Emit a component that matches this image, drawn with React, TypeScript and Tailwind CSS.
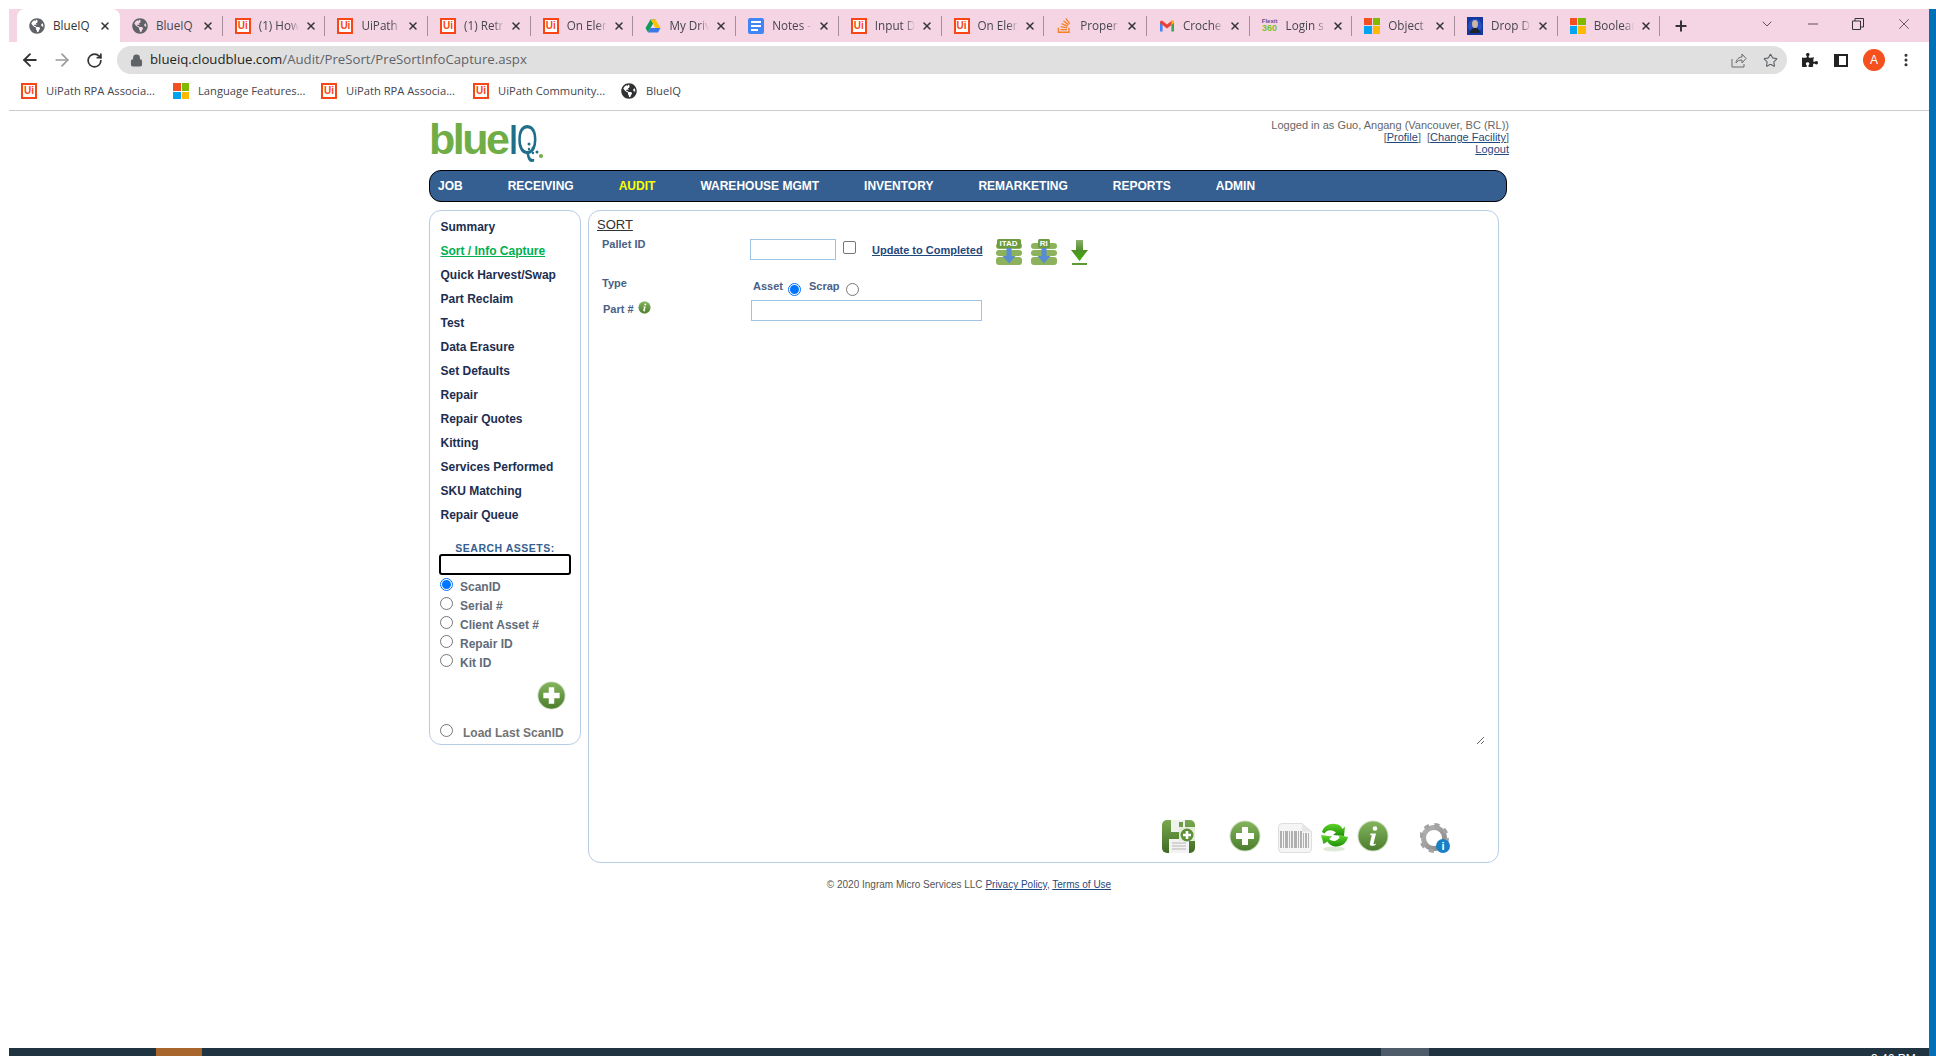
import { ArrowLeft, ArrowRight, RotateCw, Lock, Star, X, Plus, ChevronDown, Minus, MoreVertical } from "lucide-react";
import { FaGlobeAmericas, FaPuzzlePiece, FaStackOverflow } from "react-icons/fa";

const Globe = ({ size = 16 }: { size?: number }) => (
  <FaGlobeAmericas size={size} className="text-[#5f6368]" />
);

const UiLogo = () => (
  <div className="flex h-4 w-4 shrink-0 items-center justify-center border-2 border-[#fa4616] bg-white text-[10px] leading-none font-bold text-[#fa4616] font-['Liberation_Sans',sans-serif]">
    Ui
  </div>
);

const MsLogo = () => (
  <div className="grid h-4 w-4 shrink-0 grid-cols-2 gap-px">
    <div className="bg-[#f25022]" />
    <div className="bg-[#7fba00]" />
    <div className="bg-[#00a4ef]" />
    <div className="bg-[#ffb900]" />
  </div>
);

const DriveLogo = () => (
  <svg width="16" height="16" viewBox="0 0 16 16">
    <path d="M5.5 1.5h5L5.5 10 3 14.5 0.5 10z" fill="#0f9d58" />
    <path d="M5.5 1.5h5l5 8.5h-5z" fill="#ffc107" />
    <path d="M3 14.5 5.5 10h10l-2.5 4.5z" fill="#3b78e7" />
  </svg>
);

const DocsLogo = () => (
  <div className="flex h-4 w-4 shrink-0 flex-col justify-center gap-[2px] rounded-[2px] bg-[#4285f4] px-[3px]">
    <div className="h-[2px] bg-white" />
    <div className="h-[2px] bg-white" />
    <div className="h-[2px] w-[7px] bg-white" />
  </div>
);

const GmailLogo = () => (
  <svg width="16" height="16" viewBox="0 0 16 16">
    <path d="M1 3.5v10h2.6V7z" fill="#4285f4" />
    <path d="M15 3.5v10h-2.6V7z" fill="#34a853" />
    <path d="M1 3.5 3 2.5 8 6.6 13 2.5l2 1V5L8 10.4 1 5z" fill="#ea4335" />
    <path d="M13 2.5l2 1V5l-2.6 2V3z" fill="#fbbc04" />
  </svg>
);

const FlexitLogo = () => (
  <div className="flex w-4 shrink-0 flex-col items-center font-['Liberation_Sans',sans-serif] leading-none font-bold">
    <span className="text-[6px] text-[#6b4a8e]">Flexit</span>
    <span className="text-[9px] text-[#7cc02a]">360</span>
  </div>
);

const AvatarLogo = () => (
  <svg width="16" height="18" viewBox="0 0 16 18" className="shrink-0">
    <rect width="16" height="18" fill="#1437a0" />
    <circle cx="8" cy="9" r="7" fill="#2a4fc0" />
    <ellipse cx="8" cy="7" rx="3" ry="4" fill="#c9b8a5" />
    <path d="M2.5 16c1-4 3.500-5 5.500-5s4.500 1 5.500 5z" fill="#1c2430" />
  </svg>
);

const SoLogo = () => <FaStackOverflow size={17} className="text-[#f48024]" />;

const tabs = [
  { title: "BlueIQ", icon: <Globe />, fade: false },
  { title: "(1) How", icon: <UiLogo />, fade: true },
  { title: "UiPath I", icon: <UiLogo />, fade: true },
  { title: "(1) Retri", icon: <UiLogo />, fade: true },
  { title: "On Elem", icon: <UiLogo />, fade: true },
  { title: "My Driv", icon: <DriveLogo />, fade: true },
  { title: "Notes -", icon: <DocsLogo />, fade: true },
  { title: "Input D", icon: <UiLogo />, fade: true },
  { title: "On Elem", icon: <UiLogo />, fade: true },
  { title: "Proper", icon: <SoLogo />, fade: true },
  { title: "Croche", icon: <GmailLogo />, fade: true },
  { title: "Login s", icon: <FlexitLogo />, fade: true },
  { title: "Object", icon: <MsLogo />, fade: true },
  { title: "Drop D", icon: <AvatarLogo />, fade: true },
  { title: "Boolear", icon: <MsLogo />, fade: true },
];

const bookmarks = [
  { title: "UiPath RPA Associa...", icon: <UiLogo />, width: "w-[152px]" },
  { title: "Language Features...", icon: <MsLogo />, width: "w-[148px]" },
  { title: "UiPath RPA Associa...", icon: <UiLogo />, width: "w-[152px]" },
  { title: "UiPath Community...", icon: <UiLogo />, width: "w-[148px]" },
  { title: "BlueIQ", icon: <FaGlobeAmericas size={16} className="text-[#2f3133]" />, width: "w-[80px]" },
];

const navItems = ["JOB", "RECEIVING", "AUDIT", "WAREHOUSE MGMT", "INVENTORY", "REMARKETING", "REPORTS", "ADMIN"];

const sideItems = [
  "Summary",
  "Sort / Info Capture",
  "Quick Harvest/Swap",
  "Part Reclaim",
  "Test",
  "Data Erasure",
  "Set Defaults",
  "Repair",
  "Repair Quotes",
  "Kitting",
  "Services Performed",
  "SKU Matching",
  "Repair Queue",
];

const searchTypes = ["ScanID", "Serial #", "Client Asset #", "Repair ID", "Kit ID"];

const Radio = ({ checked = false }: { checked?: boolean }) => (
  <div className={`flex h-[13px] w-[13px] shrink-0 items-center justify-center rounded-full border bg-white ${checked ? "border-[#0075ff]" : "border-[#767676]"}`}>
    {checked ? <div className="h-[9px] w-[9px] rounded-full bg-[#0075ff]" /> : null}
  </div>
);

const PlusCircle = ({ size }: { size: number }) => (
  <svg width={size} height={size} viewBox="0 0 32 32" className="shrink-0">
    <defs>
      <linearGradient id="pc" x1="0" y1="0" x2="0" y2="1">
        <stop offset="0" stopColor="#84b55c" />
        <stop offset="1" stopColor="#4b7d2d" />
      </linearGradient>
    </defs>
    <circle cx="16" cy="16" r="15.500" fill="#cfdcc4" />
    <circle cx="16" cy="16" r="14.500" fill="url(#pc)" />
    <path d="M13 7h6v6h6v6h-6v6h-6v-6H7v-6h6z" fill="#fff" />
  </svg>
);

const InfoCircle = ({ size }: { size: number }) => (
  <svg width={size} height={size} viewBox="0 0 32 32" className="shrink-0">
    <defs>
      <linearGradient id="ic" x1="0" y1="0" x2="0" y2="1">
        <stop offset="0" stopColor="#84b55c" />
        <stop offset="1" stopColor="#4b7d2d" />
      </linearGradient>
    </defs>
    <circle cx="16" cy="16" r="15.500" fill="#cfdcc4" />
    <circle cx="16" cy="16" r="14.500" fill="url(#ic)" />
    <circle cx="18" cy="8.500" r="2.300" fill="#fff" />
    <path d="M13.500 13.500h5.500l-2.500 10c-.2.900.6 1 2.300.1l-.3 1.300c-2.500 1.400-6.300 1.500-5.700-1.300l2-8.400h-1.700z" fill="#fff" />
  </svg>
);

// green stack with a blue down arrow, label on a cap at the top
const StackIcon = ({ label, capX, capW }: { label: string; capX: number; capW: number }) => (
  <div className="relative h-[26px] w-[26px] shrink-0">
    <svg width="26" height="26" viewBox="0 0 26 26" className="absolute top-0 left-0">
      <rect x="0" y="4" width="26" height="6" rx="3" fill="#8cb35c" />
      <rect x="0" y="11" width="26" height="6" rx="3" fill="#8cb35c" />
      <rect x="0" y="18" width="26" height="8" rx="3" fill="#8cb35c" />
      <rect x={capX} y="0" width={capW} height="9" rx="1.500" fill="#6f9a40" />
      <path d="M10.500 9h5v8h4l-6.500 7.500L6.500 17h4z" fill="#5b8bd0" />
    </svg>
    <span className="absolute top-0 left-0 w-full text-center text-[8px] leading-[9px] font-bold text-white">{label}</span>
  </div>
);

const DownloadIcon = () => (
  <svg width="17" height="25" viewBox="0 0 17 25" className="shrink-0">
    <defs>
      <linearGradient id="dl" x1="0" y1="0" x2="0" y2="1">
        <stop offset="0" stopColor="#8fae6e" />
        <stop offset="0.500" stopColor="#4f8f2a" />
        <stop offset="1" stopColor="#3fb000" />
      </linearGradient>
    </defs>
    <path d="M5 0h7v10h5l-8.500 11L0 10h5z" fill="url(#dl)" />
    <rect x="1" y="23" width="15" height="2" fill="#5c9a33" />
  </svg>
);

const SaveIcon = () => (
  <div className="relative h-[33px] w-[33px] shrink-0">
    <svg width="33" height="33" viewBox="0 0 33 33">
      <defs>
        <linearGradient id="sv" x1="0" y1="0" x2="0" y2="1">
          <stop offset="0" stopColor="#78a94f" />
          <stop offset="1" stopColor="#3f6b22" />
        </linearGradient>
      </defs>
      <rect width="33" height="33" rx="5" fill="url(#sv)" />
      <rect x="9" y="0" width="14" height="12" fill="#eef2ea" />
      <rect x="17" y="2" width="4" height="8" fill="#6f9a4b" />
      <rect x="7" y="19" width="20" height="14" fill="#f3f3f3" />
      <path d="M10 23h14M10 26h14M10 29h14" stroke="#b5b5b5" strokeWidth="1" />
      <rect x="17" y="7" width="16" height="14" fill="#e5ecdc" />
      <circle cx="25" cy="15" r="6.500" fill="#5d9037" />
      <path d="M23.700 11h2.600v2.700H29v2.600h-2.700V19h-2.600v-2.700H21v-2.600h2.700z" fill="#fff" />
    </svg>
  </div>
);

const BarcodeIcon = () => (
  <svg width="34" height="30" viewBox="0 0 34 30" className="shrink-0">
    <path d="M4 .5h20l9.500 8V26a3.500 3.500 0 0 1-3.500 3.500H4A3.500 3.500 0 0 1 .5 26V4A3.500 3.500 0 0 1 4 .5z" fill="#f5f5f5" stroke="#dedede" />
    <path d="M24 .5V8.500h9.500z" fill="#e6e6e6" />
    <g fill="#b0b0b0">
      <rect x="2" y="8" width="2" height="17" />
      <rect x="5" y="8" width="1" height="17" />
      <rect x="7" y="8" width="3" height="17" />
      <rect x="11" y="8" width="1" height="17" />
      <rect x="13" y="8" width="2" height="17" />
      <rect x="16" y="8" width="3" height="17" />
      <rect x="20" y="8" width="1" height="17" />
      <rect x="22" y="8" width="2" height="17" />
      <rect x="25" y="10" width="1" height="15" />
      <rect x="27" y="10" width="2" height="15" />
      <rect x="30" y="10" width="1" height="15" />
    </g>
  </svg>
);

const RefreshIcon = () => (
  <svg width="28" height="31" viewBox="0 0 28 31" className="shrink-0">
    <defs>
      <linearGradient id="rf" x1="0" y1="0" x2="0" y2="1">
        <stop offset="0" stopColor="#5fd42a" />
        <stop offset="1" stopColor="#1f8f06" />
      </linearGradient>
    </defs>
    <ellipse cx="14" cy="28" rx="11" ry="2.500" fill="#dfe9d8" />
    <path d="M2 11C4 4 11 1 18 3.500c2 .8 3.500 2.500 4.500 4.500L25 5.500l-1 9.500-11-1 3-2.500C11 8 7 9 4.500 12.500z" fill="url(#rf)" />
    <path d="M1 14l11 1.500-3 2.500c4 3 8 2.500 10.500-1.500l-1-2.500L28 16c-1.500 7-8.500 11-15 9-2.500-.8-4.500-2.500-5.500-4.500L3.500 23z" fill="url(#rf)" />
  </svg>
);

const GearIcon = () => (
  <div className="relative h-[30px] w-[30px] shrink-0">
    <svg width="30" height="30" viewBox="0 0 30 30">
      <defs>
        <linearGradient id="gr" x1="0" y1="0" x2="1" y2="1">
          <stop offset="0" stopColor="#b5b5b5" />
          <stop offset="1" stopColor="#858585" />
        </linearGradient>
      </defs>
      <circle cx="14" cy="15" r="10.500" fill="none" stroke="url(#gr)" strokeWidth="5" />
      <circle cx="14" cy="15" r="13" fill="none" stroke="#a3a3a3" strokeWidth="4" strokeDasharray="5 5.200" />
    </svg>
    <div className="absolute right-0 bottom-0 flex h-[14px] w-[14px] items-center justify-center rounded-full bg-[#1a7fc4] text-[11px] leading-none font-bold text-white">
      i
    </div>
  </div>
);

export default function App() {
  return (
    <div className="flex h-[1056px] w-[1936px] overflow-hidden bg-white font-['Liberation_Sans',Arial,sans-serif]">
      <div className="w-[9px] shrink-0" />
      <div className="flex w-[1920px] shrink-0 flex-col">
        {/* browser chrome */}
        <div className="mt-[9px] flex h-[33px] shrink-0 items-center bg-[#f5d5e4] pl-2 font-['Open_Sans',sans-serif] text-[11.7px] text-[#45454d]">
          <div className="flex h-full w-[103px] shrink-0 items-center rounded-t-lg bg-white pl-3 text-[#333]">
            <Globe />
            <span className="ml-2 w-[40px] overflow-hidden whitespace-nowrap">BlueIQ</span>
            <X size={12} strokeWidth={3} className="ml-[6px] text-[#333]" />
          </div>
          {tabs.map((tab, i) => (
            <div key={i} className="flex h-[20px] w-[102.7px] shrink-0 items-center border-r border-[#a58e9a] pl-3">
              <div className="flex w-4 shrink-0 justify-center">{tab.icon}</div>
              <span className={`ml-2 w-[40px] overflow-hidden whitespace-nowrap ${tab.fade ? "[mask-image:linear-gradient(to_right,black_75%,transparent)]" : ""}`}>
                {tab.title}
              </span>
              <X size={12} strokeWidth={3} className="ml-[6px] text-[#333]" />
            </div>
          ))}
          <Plus size={16} strokeWidth={3} className="ml-[13px] text-[#333]" />
          <ChevronDown size={16} strokeWidth={1.2} className="mb-1 ml-[70px] text-[#333]" />
          <Minus size={16} strokeWidth={1.2} className="mb-1 ml-[30px] text-[#333]" />
          <svg width="12" height="12" viewBox="0 0 12 12" className="mb-1 ml-[31px]">
            <path d="M.5 3h8v8.500h-8zM3 3V.5h8.500V9H8.500" fill="none" stroke="#333" />
          </svg>
          <X size={18} strokeWidth={1} className="mb-1 ml-[31px] text-[#333]" />
        </div>
        <div className="flex h-9 shrink-0 items-center pl-[11px] text-[#333]">
          <ArrowLeft size={20} strokeWidth={2.2} />
          <ArrowRight size={20} strokeWidth={2} className="ml-[12px] text-[#9a9a9a]" />
          <RotateCw size={17} strokeWidth={2.4} className="ml-[14px]" />
          <div className="ml-[14px] flex h-7 w-[1670px] shrink-0 items-center rounded-full bg-[#e0e0e0] pl-[13px] pr-[9px]">
            <Lock size={13} strokeWidth={2.5} className="text-[#5f6368]" fill="#5f6368" />
            <span className="ml-[7px] flex-1 font-['Open_Sans',sans-serif] text-[13.2px] text-[#5f6368]">
              <span className="text-[#222]">blueiq.cloudblue.com</span>/Audit/PreSort/PreSortInfoCapture.aspx
            </span>
            <svg width="16" height="16" viewBox="0 0 16 16" className="mr-[16px]">
              <path d="M1 7v8h12v-3M5 11c.5-4 3-6 6-6V2l4 4.500-4 4.500V8c-3 0-5 1-6 3z" fill="none" stroke="#6a6a6a" />
            </svg>
            <Star size={15} strokeWidth={1.8} className="text-[#5f6368]" />
          </div>
          <FaPuzzlePiece size={16} className="ml-[15px] shrink-0 text-[#222]" />
          <div className="ml-[16px] flex h-[13px] w-[14px] shrink-0 justify-end border-2 border-[#222] bg-[#222]">
            <div className="h-full w-[7px] bg-white" />
          </div>
          <div className="ml-[15px] flex h-[22px] w-[22px] shrink-0 items-center justify-center rounded-full bg-[#f4511e] text-[12px] text-white">A</div>
          <MoreVertical size={16} strokeWidth={2.6} className="ml-[13px] shrink-0 text-[#333]" />
        </div>
        <div className="flex h-[33px] shrink-0 items-center border-b border-[#cccccc] pl-[12px] pb-[5px] font-['Open_Sans',sans-serif] text-[11.2px] text-[#45454d]">
          {bookmarks.map((b, i) => (
            <div key={i} className={`flex items-center gap-[9px] whitespace-nowrap ${b.width}`}>
              {b.icon}
              <span>{b.title}</span>
            </div>
          ))}
        </div>

        {/* page */}
        <div className="ml-[420px] w-[1080px] text-[12px]">
          <div className="flex h-[59px] justify-between">
            <div className="relative mt-[6px] flex h-[44px] items-start text-[43px] leading-[44px]">
              <span className="font-bold tracking-[-2.5px] text-[#70ad47]">blue</span>
              <span className="text-[#1f6f8b]">I</span>
              <span className="ml-[-2px] inline-block origin-left scale-x-[0.62] text-[#1f6f8b]">Q</span>
              <svg width="24" height="20" viewBox="0 0 24 20" className="absolute top-[24px] left-[92px]">
                <circle cx="8" cy="3" r="1.500" fill="#1f6f8b" />
                <circle cx="12" cy="7" r="1.500" fill="#1f6f8b" />
                <circle cx="8" cy="8" r="1.200" fill="#1f6f8b" />
                <circle cx="16" cy="11" r="1.500" fill="#1f6f8b" />
                <circle cx="12" cy="12" r="1.200" fill="#1f6f8b" />
                <circle cx="20" cy="15" r="2" fill="#70ad47" />
              </svg>
            </div>
            <div className="mt-2 text-right text-[11px] leading-[12px] text-[#666666]">
              <div>Logged in as Guo, Angang (Vancouver, BC (RL))</div>
              <div>
                [<a className="text-[#1f497d] underline">Profile</a>]&nbsp; [<a className="text-[#1f497d] underline">Change Facility</a>]
              </div>
              <div>
                <a className="text-[#1f497d] underline">Logout</a>
              </div>
            </div>
          </div>

          <div className="flex h-8 w-[1078px] items-center gap-[45px] rounded-xl border border-black bg-[#365f91] pl-2 text-[12px] font-bold text-white">
            {navItems.map((item) => (
              <span key={item} className={item === "AUDIT" ? "text-[#ffff00]" : ""}>
                {item}
              </span>
            ))}
          </div>

          <div className="mt-2 flex items-start gap-[7px]">
            <div className="h-[535px] w-[152px] shrink-0 rounded-xl border border-[#b8cce4] pt-[4px]">
              {sideItems.map((item) => (
                <div key={item} className="flex h-6 items-center pl-[10.5px] font-bold text-[#1c2e50]">
                  {item === "Sort / Info Capture" ? <span className="text-[#00b050] underline">{item}</span> : item}
                </div>
              ))}
              <div className="mt-[15px] text-center text-[10.5px] leading-3 font-bold tracking-[0.5px] text-[#365f91]">SEARCH ASSETS:</div>
              <input className="mx-[9px] block h-[21px] w-[132px] rounded-[3px] border-2 border-black bg-white outline-none" />
              <div className="flex flex-col pl-[10px] font-bold text-[#5f6b7a]">
                {searchTypes.map((type, i) => (
                  <div key={type} className="flex h-[19px] items-center gap-[7px]">
                    <Radio checked={i === 0} />
                    <span className="mt-[4px]">{type}</span>
                  </div>
                ))}
              </div>
              <div className="mt-[10.5px] flex justify-end pr-[14px]">
                <PlusCircle size={29} />
              </div>
              <div className="mt-[10px] flex items-center gap-[10px] pl-[10px] font-bold text-[#737373]">
                <Radio />
                <span className="mt-[4px]">Load Last ScanID</span>
              </div>
            </div>

            <div className="flex h-[653px] w-[911px] shrink-0 flex-col rounded-xl border border-[#b8cce4] pt-[6px] pl-2 text-[11px] font-bold text-[#4a6084]">
              <div className="text-[13px] leading-4 font-normal text-[#333333] underline">SORT</div>
              <div className="mt-[6px] flex h-[33px] items-start pl-[5px]">
                <span className="mt-[-3px] w-[148px] leading-4">Pallet ID</span>
                <input className="h-[21px] w-[86px] border border-[#9dc3e6] bg-white outline-none" />
                <div className="mt-[2px] ml-[7px] h-[13px] w-[13px] rounded-[2px] border border-[#767676] bg-white" />
                <a className="mt-[3px] ml-[16px] text-[#1f497d] underline">Update to Completed</a>
                <div className="ml-[13px] flex items-start gap-[9px]">
                  <StackIcon label="ITAD" capX={1} capW={24} />
                  <StackIcon label="RI" capX={7} capW={12} />
                  <div className="mt-[1px] ml-[5px]">
                    <DownloadIcon />
                  </div>
                </div>
              </div>
              <div className="mt-[8px] flex h-[19px] items-start pl-[5px]">
                <span className="mt-[-5px] w-[151px] leading-4">Type</span>
                <div className="flex items-start">
                  <span className="mt-[-2px] leading-4">Asset</span>
                  <div className="mt-[3px] ml-[5px]">
                    <Radio checked />
                  </div>
                  <span className="mt-[-2px] ml-2 leading-4">Scrap</span>
                  <div className="mt-[3px] ml-[6px]">
                    <Radio />
                  </div>
                </div>
              </div>
              <div className="flex h-[21px] items-start pl-[6px]">
                <span className="mt-[2px] flex w-[148px] items-center gap-1 leading-4">
                  Part #
                  <span className="mt-[-3px]">
                    <InfoCircle size={13} />
                  </span>
                </span>
                <input className="mt-[1px] h-[21px] w-[231px] border border-[#9dc3e6] bg-white outline-none" />
              </div>
              <textarea className="mt-[9px] ml-[154px] block h-[416px] w-[734px] border-0 bg-white outline-none" />
              <div className="mt-[75px] flex items-start pl-[565px]">
                <SaveIcon />
                <div className="ml-[34px]">
                  <PlusCircle size={32} />
                </div>
                <div className="mt-[3px] ml-[17px]">
                  <BarcodeIcon />
                </div>
                <div className="mt-[1px] ml-[8px]">
                  <RefreshIcon />
                </div>
                <div className="ml-[9px]">
                  <InfoCircle size={32} />
                </div>
                <div className="mt-[3px] ml-[31px]">
                  <GearIcon />
                </div>
              </div>
            </div>
          </div>

          <div className="mt-[16px] text-center text-[10px] leading-3 text-[#555555]">
            © 2020 Ingram Micro Services LLC <a className="text-[#1f497d] underline">Privacy Policy</a>, <a className="text-[#1f497d] underline">Terms of Use</a>
          </div>
        </div>

        {/* taskbar, cut off by the bottom of the screenshot */}
        <div className="mt-auto flex h-2 shrink-0 overflow-hidden bg-[#1f3340]">
          <div className="ml-[147px] h-full w-[46px] bg-[#a8652c]" />
          <div className="ml-[1179px] h-full w-[48px] bg-[#4d5c68]" />
          <div className="ml-[442px] pt-[3px] text-[12px] leading-4 whitespace-nowrap text-white">3:46 PM</div>
        </div>
      </div>
      <div className="mt-[9px] w-[7px] shrink-0 bg-[#0070b8]" />
    </div>
  );
}
